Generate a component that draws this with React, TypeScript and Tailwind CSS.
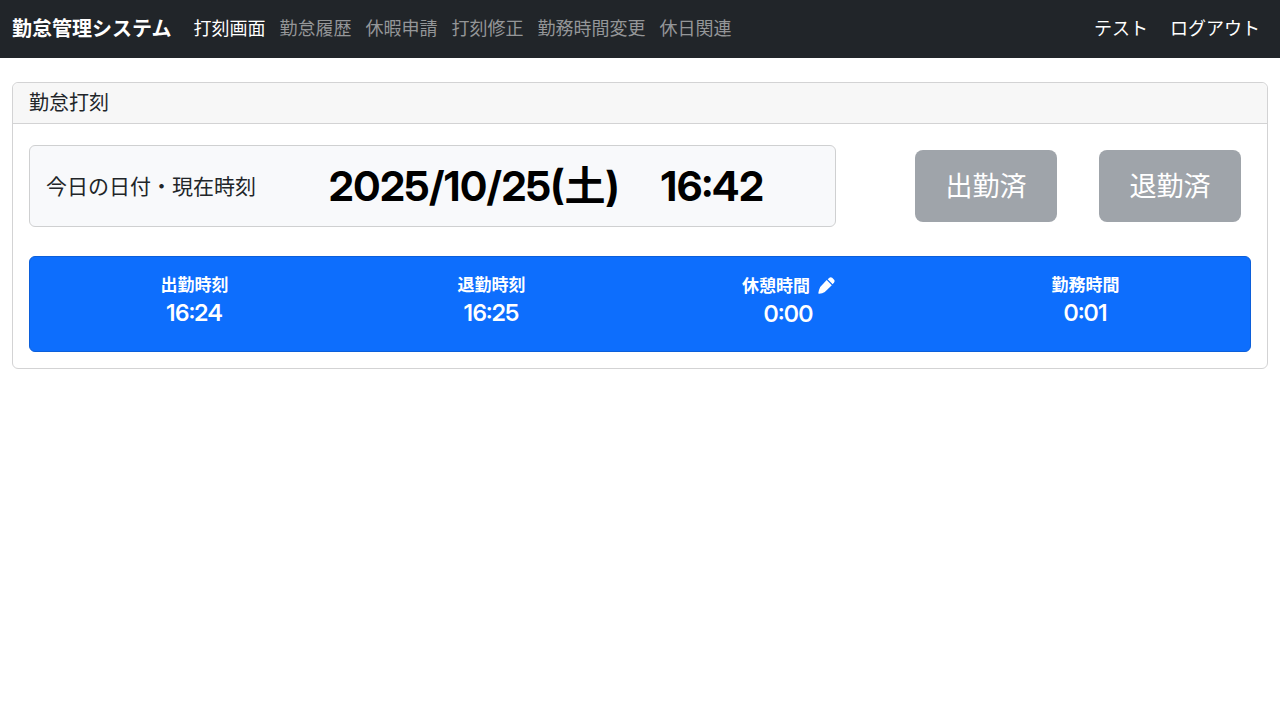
const links = ["打刻画面", "勤怠履歴", "休暇申請", "打刻修正", "勤務時間変更", "休日関連"];

const stats = [
  { label: "出勤時刻", value: "16:24", editable: false },
  { label: "退勤時刻", value: "16:25", editable: false },
  { label: "休憩時間", value: "0:00", editable: true },
  { label: "勤務時間", value: "0:01", editable: false },
];

function PencilIcon() {
  return (
    <svg viewBox="0 0 17 17" className="size-[17px]" fill="currentColor" aria-hidden="true">
      <path d="M8.7 3.1 13.8 8.2 6.8 15Q4.4 16.4 1.1 16.8Q.2 16.9.3 16Q.8 12.8 2.2 9.9Z" />
      <path d="M9.7 2.2 11.4.7Q12.8-.2 14.2.8L16.1 2.7Q17.1 4 16.2 5.3L14.7 7.2Z" />
    </svg>
  );
}

export default function App() {
  return (
    <div className="font-[Inter,'Noto_Sans_CJK_JP',sans-serif] text-[#212529]">
      <nav className="flex h-[58px] items-center bg-[#212529] px-3 text-lg text-white">
        <a href="#" className="mr-[15px] text-xl font-bold">勤怠管理システム</a>
        <ul className="flex">
          {links.map((link, i) => (
            <li key={link}>
              <a href="#" className={i === 0 ? "px-[7px] text-white" : "px-[7px] text-[#949698]"}>{link}</a>
            </li>
          ))}
        </ul>
        <div className="ml-auto flex gap-[22px] pr-2">
          <a href="#">テスト</a>
          <a href="#">ログアウト</a>
        </div>
      </nav>
      <main className="px-3 py-6">
        <section className="rounded-md border border-[#d3d3d4]">
          <h1 className="h-[41px] rounded-t-md border-b border-[#d3d3d4] bg-[#f7f7f7] px-4 text-xl leading-10">勤怠打刻</h1>
          <div className="px-4 pb-4 pt-[21px]">
            <div className="flex items-center">
              <div className="flex h-[82px] w-[66%] items-center rounded-md border border-[#cfd0d1] bg-[#f8f9fb] px-4 pt-0.5">
                <span className="w-[283px] shrink-0 text-[21px]">今日の日付・現在時刻</span>
                <div className="flex gap-[42px] whitespace-nowrap font-['Inter_Display','Noto_Sans_CJK_JP',sans-serif] text-[41px] font-bold text-black">
                  <span>2025/10/25(土)</span>
                  <span>16:42</span>
                </div>
              </div>
              <div className="ml-auto flex gap-[42px] pr-[10px] text-[27px] text-white">
                <button disabled className="h-[72px] w-[142px] rounded-lg bg-[#9fa4aa] pt-0.5">出勤済</button>
                <button disabled className="h-[72px] w-[142px] rounded-lg bg-[#9fa4aa] pt-0.5">退勤済</button>
              </div>
            </div>
            <div className="mt-[29px] grid h-24 grid-cols-4 rounded-md border border-[#0c5fda] bg-[#0d6efd] px-4 pt-4 text-center text-white">
              {stats.map((s) => (
                <div key={s.label}>
                  <div className="flex items-center justify-center gap-2 text-[17px] font-bold leading-6">
                    {s.label}
                    {s.editable && <button aria-label="休憩時間を編集" className="py-1"><PencilIcon /></button>}
                  </div>
                  <div className="font-['Inter_Display'] text-[23px] font-semibold leading-8">{s.value}</div>
                </div>
              ))}
            </div>
          </div>
        </section>
      </main>
    </div>
  );
}
